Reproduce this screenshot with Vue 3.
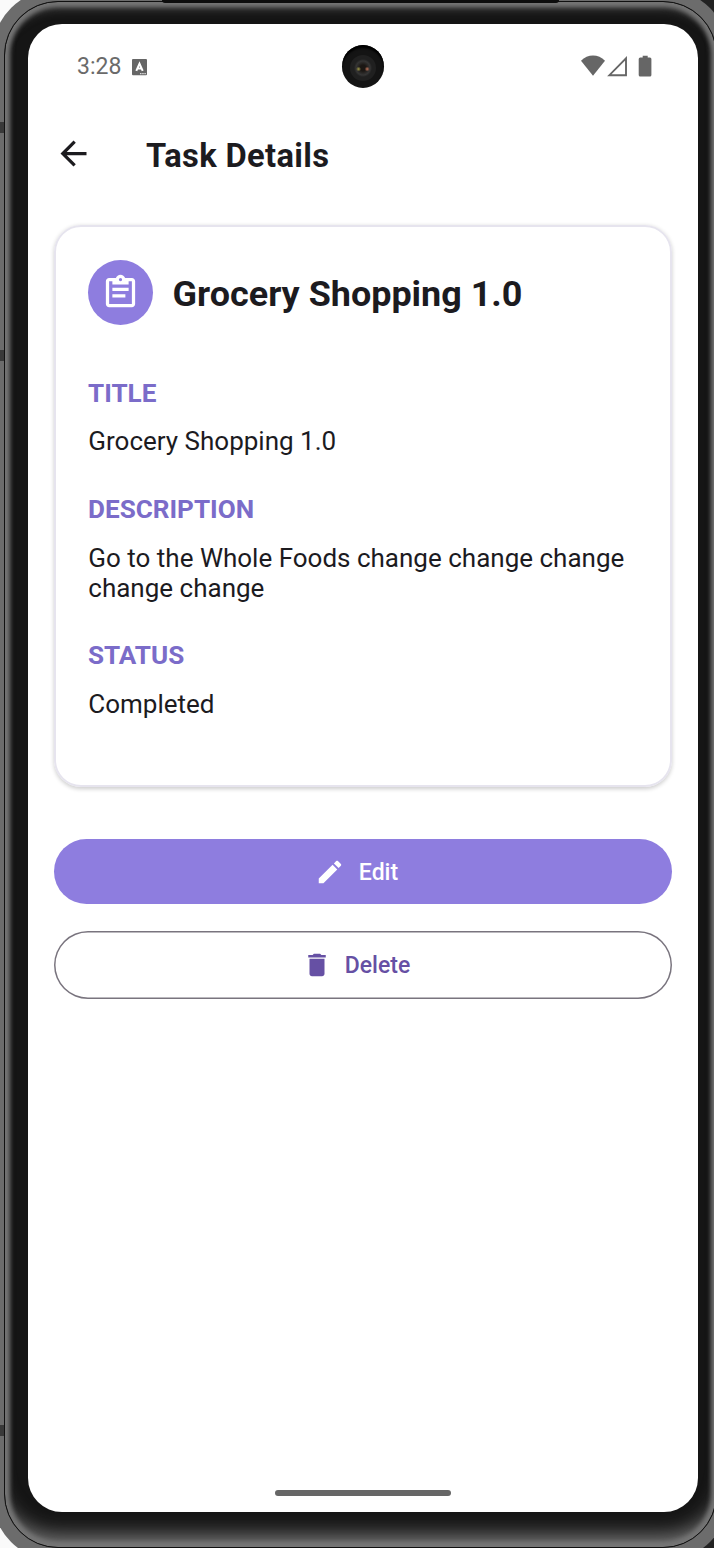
<script setup>
const fields = [
  { label: 'TITLE', value: 'Grocery Shopping 1.0' },
  { label: 'DESCRIPTION', value: 'Go to the Whole Foods change change change change change' },
  { label: 'STATUS', value: 'Completed' },
]
</script>

<template>
  <div class="stage">
    <div class="shell"></div>
    <div class="bezel"></div>
    <div class="lip"></div>
    <i class="notch n1"></i><i class="notch n2"></i><i class="notch n3"></i>
    <div class="screen">
      <header class="status">
        <span class="time">3:28</span>
        <svg class="badge" width="16" height="17" viewBox="0 0 16 17">
          <rect width="15" height="16.3" rx="1" fill="#666" />
          <path d="M4.3 11.8 7.500 4.6 10.7 11.8M5.4 9.6h4.2" fill="none" stroke="#fff" stroke-width="2" />
          <path d="M8 14.6h1.5M10.2 14.6h1.5M12.4 14.6h1.4" stroke="#ddd" stroke-width="1.2" />
        </svg>
        <svg class="signals" width="72" height="23" viewBox="0 0 72 23">
          <path d="M0 5.8C6.5-1.2 17.5-1.2 24 5.8L12 20.7Z" fill="#666" />
          <path d="M28.400 20.2H45V3.4Z" fill="none" stroke="#666" stroke-width="1.9" />
          <path d="M61.700 .7h5v1.8h2.2q1.5 0 1.5 1.5v16q0 1.500-1.500 1.500h-9.700q-1.500 0-1.500-1.500V4q0-1.500 1.500-1.500H61.700Z" fill="#666" />
        </svg>
      </header>
      <div class="camera"><span class="lens"></span></div>

      <nav class="appbar">
        <svg width="39" height="39" viewBox="0 0 24 24">
          <path d="M20 11H7.830l5.590-5.590L12 4l-8 8 8 8 1.410-1.410L7.830 13H20v-2z" fill="#1c1b1f" />
        </svg>
        <h1>Task Details</h1>
      </nav>

      <main>
        <section class="card">
          <div class="heading">
            <span class="avatar">
              <svg width="39" height="39" viewBox="0 0 24 24">
                <path fill="#fff" fill-rule="evenodd" d="M19 3h-4.180C14.400 1.840 13.300 1 12 1s-2.400.840-2.820 2H5c-1.100 0-2 .9-2 2v14c0 1.100.9 2 2 2h14c1.100 0 2-.9 2-2V5c0-1.100-.9-2-2-2zM12 3a1 1 0 1 1 0 2a1 1 0 1 1 0-2zM19 19H5V5h2v2h10V5h2v14z" />
                <path fill="#fff" d="M7 9h10v2H7zM7 13h8v2H7z" />
              </svg>
            </span>
            <h2>Grocery Shopping 1.0</h2>
          </div>
          <div v-for="f in fields" :key="f.label" class="field">
            <h3>{{ f.label }}</h3>
            <p>{{ f.value }}</p>
          </div>
        </section>

        <button class="btn edit">
          <svg width="30" height="30" viewBox="0 0 24 24">
            <path fill="#fff" d="M3 17.250V21h3.750L17.810 9.940l-3.750-3.750L3 17.250zM20.710 7.040c.390-.390.390-1.020 0-1.410l-2.340-2.340c-.390-.390-1.020-.390-1.410 0l-1.830 1.830 3.750 3.750 1.830-1.830z" />
          </svg>
          <span>Edit</span>
        </button>
        <button class="btn delete">
          <svg width="30" height="30" viewBox="0 0 24 24">
            <path fill="#6650a4" d="M6 19c0 1.100.9 2 2 2h8c1.100 0 2-.9 2-2V7H6v12zM19 4h-3.500l-1-1h-5l-1 1H5v2h14V4z" />
          </svg>
          <span>Delete</span>
        </button>
      </main>
      <div class="home"></div>
    </div>
  </div>
</template>

<style>
html, body { margin: 0; overflow: hidden; }
</style>

<style scoped>
* { box-sizing: border-box; }
h1, h2, h3, p { margin: 0; }
.stage {
  position: relative;
  width: 714px;
  height: 1548px;
  overflow: hidden;
  padding: 24px 16px 36px 28px;
  background: linear-gradient(90deg, #fafafa 50%, #222 50%);
  font-family: Roboto, "Liberation Sans", sans-serif;
  color: #1c1b1f;
}
.shell, .bezel, .lip, .notch { position: absolute; }
.shell {
  inset: -11.500px -15px -12.500px -8.500px;
  border-radius: 65px;
  background: #6c6c6c;
}
.bezel {
  inset: 1px -3px 0 4px;
  border-radius: 54px;
  background: #151515;
  border: 1.500px solid #111;
  box-shadow:
    inset 0 0 4px 5px #757575,
    inset 0 -24px 20px -12px #777,
    inset 0 16px 8px -8px #3d3d3d;
}
.lip {
  left: 162px;
  top: 0;
  width: 397px;
  height: 3px;
  background: #0d0d0d;
  border-radius: 0 0 5px 5px;
}
.notch { left: 0; width: 4px; height: 11px; background: #393939; }
.n1 { top: 122px; }
.n2 { top: 350px; }
.n3 { top: 1425px; }
.screen {
  position: relative;
  display: flex;
  flex-direction: column;
  width: 670px;
  height: 1488px;
  border-radius: 34px;
  background: #fff;
  overflow: hidden;
}
.status {
  display: flex;
  align-items: center;
  height: 85px;
  padding: 0 45px 0 49px;
}
.time { font-size: 23px; color: #6a6a6a; }
.badge { margin-left: 11px; margin-top: 2px; }
.signals { margin-left: auto; }
.camera {
  position: absolute;
  left: 314px;
  top: 21px;
  width: 42px;
  height: 43px;
  border-radius: 50%;
  background: #141414;
  box-shadow: inset 0 3px 2px #000;
  display: grid;
  place-items: center;
  padding-top: 2px;
}
.lens {
  width: 26px;
  height: 26px;
  border-radius: 50%;
  background:
    radial-gradient(circle at 33% 54%, #a09a48 0, #84803f00 2.500px),
    radial-gradient(circle at 66% 54%, #c0745a 0, #a3624a00 2.500px),
    radial-gradient(circle, #1b1714 0 3px, #353535 7px, #202020 9px);
}
.appbar {
  display: flex;
  align-items: center;
  height: 91px;
  padding-left: 26px;
}
.appbar svg { margin-top: -2px; }
.appbar h1 {
  margin: 2px 0 0 53px;
  font-size: 32.700px;
  line-height: 40px;
  font-weight: 700;
  letter-spacing: .350px;
}
main {
  display: flex;
  flex-direction: column;
  padding: 25px 26px 0;
}
.card {
  height: 562px;
  padding: 33px 32px 0;
  border: 2px solid #e6e4ee;
  border-radius: 27px;
  box-shadow: 0 1.500px 4px rgba(0, 0, 0, .2);
}
.heading { display: flex; align-items: center; height: 65px; margin-bottom: 52.500px; }
.avatar {
  display: grid;
  place-items: center;
  width: 65px;
  height: 65px;
  padding-bottom: 1px;
  border-radius: 50%;
  background: #8e7ddf;
}
.heading h2 { margin-left: 19.600px; font-size: 35.950px; line-height: 44px; padding-top: 3px; }
.field { margin-bottom: 37.500px; }
.field h3 { font-size: 26.100px; line-height: 30px; color: #7b6cc9; }
.field p { margin-top: 18.900px; font-size: 26px; line-height: 30px; padding-left: .3px; }
.btn {
  display: flex;
  align-items: center;
  justify-content: center;
  padding: 0 12px 0 0;
  border: 0;
  border-radius: 34px;
  font-family: inherit;
  font-size: 23px;
  font-weight: 500;
}
.btn svg { margin-right: 13px; }
.edit { height: 65px; margin-top: 52px; background: #8e7ddf; color: #fff; }
.edit svg { margin-left: -1px; margin-right: 14px; }
.edit span { padding-top: 1px; }
.delete {
  height: 68px;
  margin-top: 27px;
  padding-right: 14px;
  border: 0;
  box-shadow: inset 0 0 0 1.500px #79747e;
  background: #fff;
  color: #6650a4;
}
.home {
  width: 176px;
  height: 6px;
  margin: auto auto 16px;
  border-radius: 3px;
  background: #666;
}
</style>
